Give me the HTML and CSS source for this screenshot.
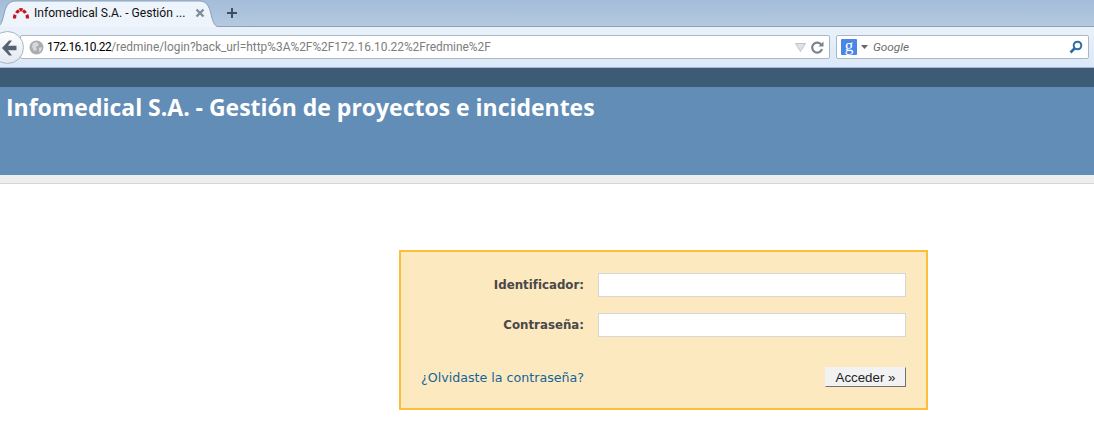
FILE: index.html
```html
<!DOCTYPE html>
<html lang="es">
<head>
<meta charset="utf-8">
<title>Infomedical S.A. - Gestión de proyectos e incidentes</title>
<link rel="stylesheet" href="styles.css">
</head>
<body>
<div class="browser">
  <div class="tabstrip">
    <div class="tab">
      <svg class="tab-shape" width="224" height="28" viewBox="0 0 224 28"><path d="M-2 28C4 28 6 23 8 14 10 5 13 1 20 1H203C210 1 213 5 215 14 217 23 219 27 224 27V28Z" fill="#eef4fb" stroke="#8aa0b8" stroke-width="1"/></svg>
      <svg class="favicon" width="18" height="12" viewBox="0 0 18 12"><g fill="none" stroke="#c4161c" stroke-width="3.200"><path d="M2.500 11.500C2.500 10 2.700 8.800 3.200 7.800"/><path d="M4.500 6 C5 5 6 4.200 7 3.500"/><path d="M7.500 3C8.500 2.600 9.500 2.600 10.500 3"/><path d="M11 3.500C12 4.200 13 5 13.500 6"/><path d="M14.800 7.800C15.300 8.800 15.500 10 15.500 11.500"/></g></svg>
      <span class="tab-title">Infomedical S.A. - Gestión ...</span>
      <svg class="tab-close" width="10" height="10" viewBox="0 0 10 10"><path d="M1.500 1.500 8.500 8.500M8.500 1.500 1.500 8.500" stroke="#7f8b98" stroke-width="2.400"/></svg>
    </div>
    <svg class="new-tab" width="12" height="12" viewBox="0 0 12 12"><path d="M6 1V11M1 6H11" stroke="#3f4f60" stroke-width="2"/></svg>
  </div>
  <div class="toolbar">
    <div class="back">
      <svg width="16" height="16" viewBox="0 0 16 16"><path d="M8 .5 1 8 8 15.500H11L7 10.200H15.500V5.800H7L11 .5Z" fill="#55626f"/></svg>
    </div>
    <div class="urlbar">
      <svg class="globe" width="15" height="15" viewBox="0 0 15 15"><circle cx="7.500" cy="7.500" r="7" fill="#a9adb1"/><path d="M4 3 8 2 10 5 7 7 8 10 5 11 3 7ZM10 8 13 7 12 11 10 12Z" fill="#d5d8da"/></svg>
      <span class="url"><span class="host">172.16.10.22</span>/redmine/login?back_url=http%3A%2F%2F172.16.10.22%2Fredmine%2F</span>
      <svg class="star" width="11" height="9" viewBox="0 0 11 9"><path d="M.5.500H10.500L5.500 8.500Z" fill="#dfe3e7" stroke="#bcc3ca"/></svg>
      <svg class="reload" width="13" height="13" viewBox="0 0 13 13"><path d="M10.500 4A5 5 0 1 0 11 8" fill="none" stroke="#77838f" stroke-width="2.200"/><path d="M7.500 5.500H12.500V.5Z" fill="#77838f"/></svg>
    </div>
    <div class="searchbar">
      <span class="g-icon">g</span>
      <svg class="caret" width="7" height="4" viewBox="0 0 7 4"><path d="M0 0H7L3.500 4Z" fill="#666"/></svg>
      <span class="engine">Google</span>
      <svg class="lens" width="14" height="14" viewBox="0 0 14 14"><circle cx="8.500" cy="5.500" r="3.800" fill="none" stroke="#2f6ca3" stroke-width="2"/><path d="M5.500 8.500 1.500 12.500" stroke="#2f6ca3" stroke-width="2.600"/></svg>
    </div>
  </div>
</div>
<div class="top-menu"></div>
<header class="header"><h1>Infomedical S.A. - Gestión de proyectos e incidentes</h1></header>
<div class="main-menu"></div>
<main class="content">
  <form class="login">
    <label class="field-label" for="user">Identificador:</label>
    <input class="field" id="user" type="text">
    <label class="field-label" for="pass">Contraseña:</label>
    <input class="field" id="pass" type="password">
    <div class="actions">
      <a class="lost" href="#">¿Olvidaste la contraseña?</a>
      <button class="submit" type="button">Acceder »</button>
    </div>
  </form>
</main>
</body>
</html>
```
FILE: styles.css
```css
* { box-sizing: border-box; }
html, body { margin: 0; padding: 0; background: #fff; overflow: hidden; }
body { width: 1094px; height: 430px; }

.browser { height: 68px; font-family: Roboto, "Liberation Sans", Arial, sans-serif; overflow: hidden; }
.tabstrip {
  height: 27px;
  display: flex;
  align-items: center;
  background: linear-gradient(to bottom, #a3bcd8 0%, #b5cae1 100%);
  border-bottom: 1px solid #8aa0b8;
}
.tab {
  position: relative;
  width: 216px;
  height: 27px;
  display: flex;
  align-items: center;
  padding: 0 0 0 12px;
  flex: none;
}
.tab-shape { position: absolute; left: -4px; top: 0; }
.favicon, .tab-title, .tab-close { position: relative; }
.favicon { flex: none; margin-right: 4px; }
.tab-title { font-size: 12.100px; color: #111; white-space: nowrap; width: 158px; }
.tab-close { flex: none; margin-left: 3px; }
.new-tab { margin-left: 10px; flex: none; }

.toolbar {
  height: 41px;
  display: flex;
  align-items: center;
  padding: 0 5px 0 0;
  background: linear-gradient(to bottom, #eaf1fa 0%, #dbe8f7 100%);
  border-bottom: 1px solid #a4b9d0;
  position: relative;
}
.back {
  position: absolute;
  left: -9px;
  top: 4px;
  width: 33px;
  height: 33px;
  border-radius: 50%;
  border: 1px solid #a8b4c2;
  background: linear-gradient(to bottom, #fdfeff, #e2e9f1);
  display: flex;
  align-items: center;
  justify-content: flex-end;
  padding-right: 6px;
  z-index: 1;
}
.urlbar, .searchbar {
  height: 24px;
  background: #fff;
  border: 1px solid #a9b8c9;
  border-radius: 2px;
  display: flex;
  align-items: center;
}
.urlbar { margin-left: 20px; width: 810px; padding: 0 5px 0 8px; }
.globe { flex: none; margin-right: 3px; }
.url { flex: 1; font-size: 11.900px; color: #7d7d7d; white-space: nowrap; }
.host { color: #000; letter-spacing: -.45px; }
.star { flex: none; margin-right: 5px; }
.reload { flex: none; }
.searchbar { margin-left: 6px; width: 253px; padding: 0 5px 0 4px; }
.g-icon {
  width: 16px;
  height: 16px;
  flex: none;
  background: #4a86e8;
  color: #fff;
  font: 400 17px/13px "Liberation Serif", serif;
  text-align: center;
  border-radius: 1px;
}
.caret { flex: none; margin: 0 5px 0 4px; }
.engine { flex: 1; font-size: 11.800px; font-style: italic; color: #6d6d6d; }
.lens { flex: none; }

.top-menu { height: 19px; background: #3e5b76; }
.header { height: 88px; background: #628db6; padding: 4px 6px 0; }
.header h1 {
  margin: 0;
  color: #fff;
  font: 700 23px/32px "Open Sans", "Liberation Sans", sans-serif;
  letter-spacing: -.02px;
  white-space: nowrap;
}
.main-menu { height: 9px; background: #eeeeee; border-bottom: 1px solid #d5d5d5; }

.content { padding: 66px 0 0 399px; font-family: "DejaVu Sans", Verdana, sans-serif; }
.login {
  width: 529px;
  height: 160px;
  background: #fde9c0;
  border: 2px solid #fdbf3b;
  padding: 21px 20px 0;
  display: grid;
  grid-template-columns: 163px 308px;
  column-gap: 14px;
  row-gap: 16px;
  align-items: center;
  align-content: start;
}
.field-label { font-size: 11.800px; font-weight: 700; color: #484848; text-align: right; white-space: nowrap; }
.field { width: 308px; height: 24px; background: #fff; border: 1px solid #d7d7d7; padding: 0; }
.actions {
  grid-column: 1 / -1;
  display: flex;
  justify-content: space-between;
  align-items: center;
  margin-top: 14px;
}
.lost { font-size: 12.650px; color: #169; text-decoration: none; }
.submit {
  width: 81px;
  height: 20px;
  padding: 0;
  background: #f2f2f2;
  border: 1px solid #f2f2f2;
  border-right-color: #707070;
  border-bottom-color: #707070;
  font: 13.300px "Liberation Sans", Arial, sans-serif;
  color: #222;
}
```
